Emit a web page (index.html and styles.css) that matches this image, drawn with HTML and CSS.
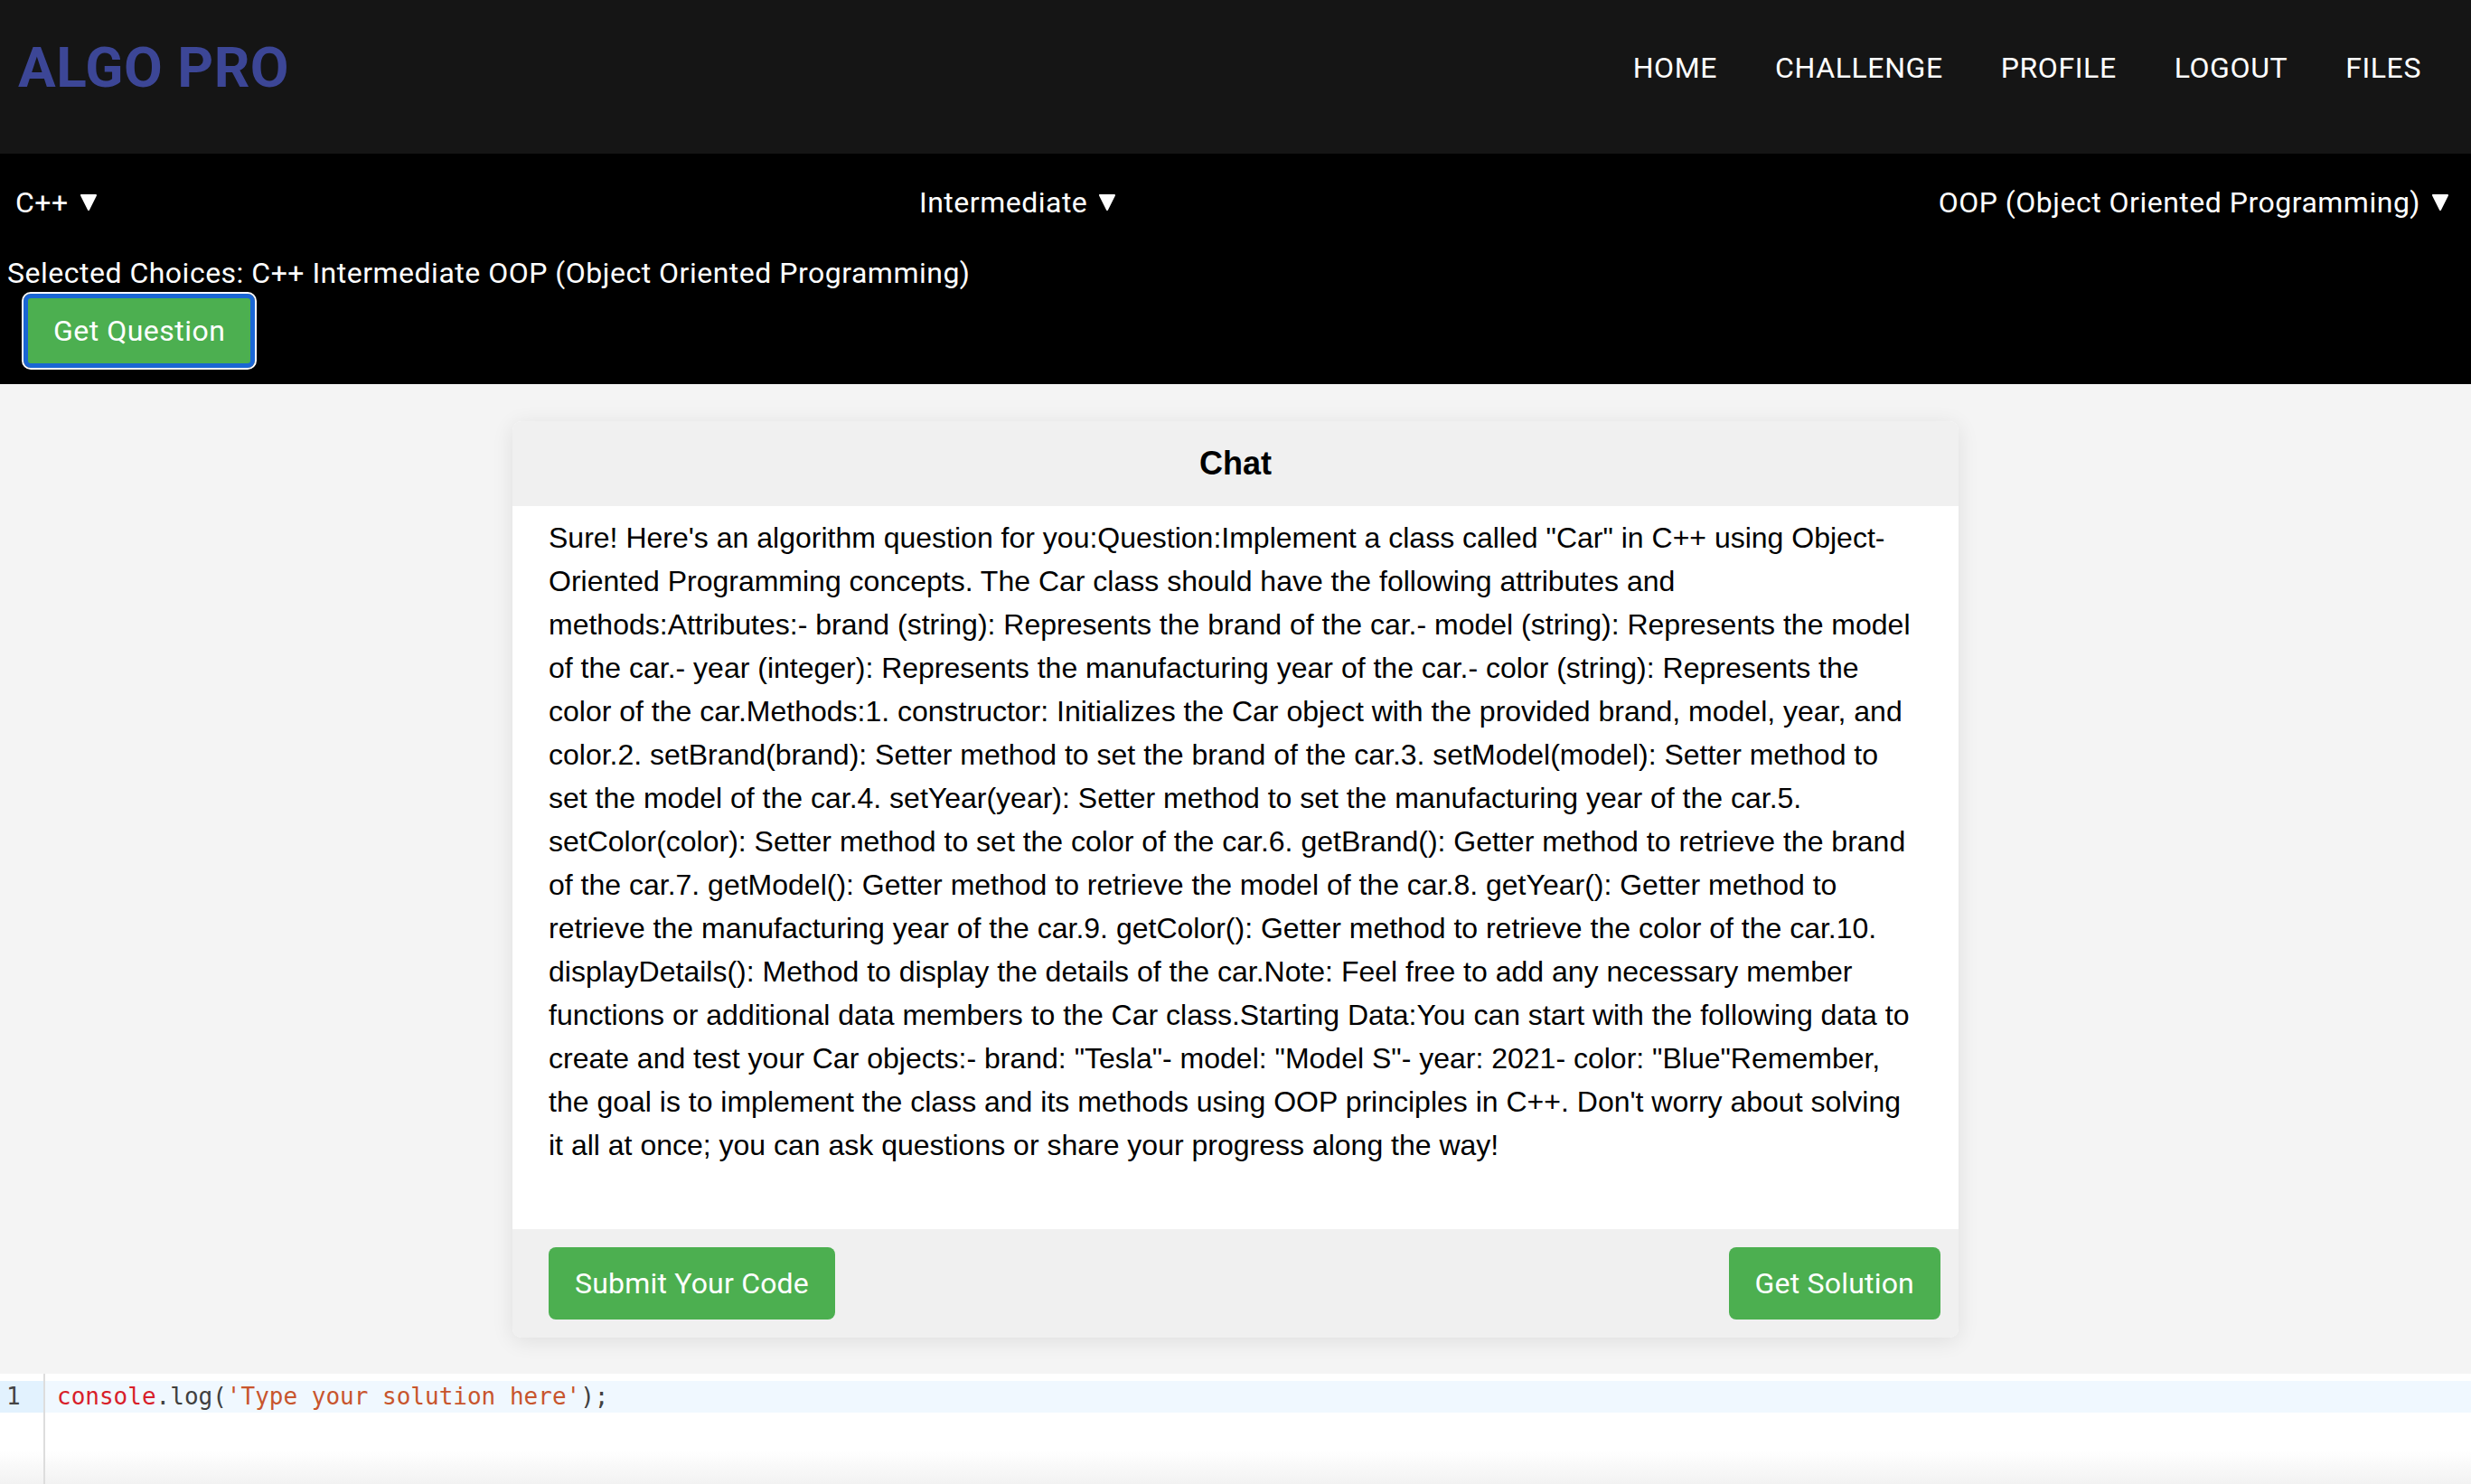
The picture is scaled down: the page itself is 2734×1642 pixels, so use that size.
FILE: index.html
```html
<!DOCTYPE html>
<html lang="en">
<head>
<meta charset="utf-8">
<title>ALGO PRO</title>
<link rel="stylesheet" href="styles.css">
</head>
<body>
<header class="topbar">
  <div class="logo">ALGO PRO</div>
  <nav class="nav">
    <a class="nav-link">HOME</a>
    <a class="nav-link">CHALLENGE</a>
    <a class="nav-link">PROFILE</a>
    <a class="nav-link">LOGOUT</a>
    <a class="nav-link">FILES</a>
  </nav>
</header>
<section class="controls">
  <div class="selects">
    <div class="select">C++<svg class="caret" viewBox="0 0 20 20"><polygon points="2,2 18,2 10,18"/></svg></div>
    <div class="select">Intermediate<svg class="caret" viewBox="0 0 20 20"><polygon points="2,2 18,2 10,18"/></svg></div>
    <div class="select">OOP (Object Oriented Programming)<svg class="caret" viewBox="0 0 20 20"><polygon points="2,2 18,2 10,18"/></svg></div>
  </div>
  <div class="selected">Selected Choices: C++ Intermediate OOP (Object Oriented Programming)</div>
  <button class="get-question">Get Question</button>
</section>
<main class="chat">
  <div class="chat-head">Chat</div>
  <div class="chat-body">Sure! Here's an algorithm question for you:Question:Implement a class called "Car" in C++ using Object-Oriented Programming concepts. The Car class should have the following attributes and methods:Attributes:- brand (string): Represents the brand of the car.- model (string): Represents the model of the car.- year (integer): Represents the manufacturing year of the car.- color (string): Represents the color of the car.Methods:1. constructor: Initializes the Car object with the provided brand, model, year, and color.2. setBrand(brand): Setter method to set the brand of the car.3. setModel(model): Setter method to set the model of the car.4. setYear(year): Setter method to set the manufacturing year of the car.5. setColor(color): Setter method to set the color of the car.6. getBrand(): Getter method to retrieve the brand of the car.7. getModel(): Getter method to retrieve the model of the car.8. getYear(): Getter method to retrieve the manufacturing year of the car.9. getColor(): Getter method to retrieve the color of the car.10. displayDetails(): Method to display the details of the car.Note: Feel free to add any necessary member functions or additional data members to the Car class.Starting Data:You can start with the following data to create and test your Car objects:- brand: "Tesla"- model: "Model S"- year: 2021- color: "Blue"Remember, the goal is to implement the class and its methods using OOP principles in C++. Don't worry about solving it all at once; you can ask questions or share your progress along the way!</div>
  <div class="chat-foot">
    <button class="btn-green btn-submit">Submit Your Code</button>
    <button class="btn-green">Get Solution</button>
  </div>
</main>
<div class="editor">
  <div class="gutter"><div class="ln ln-active">1</div></div>
  <div class="code"><div class="cline cline-active"><span class="tok-var">console</span><span class="tok-punc">.log(</span><span class="tok-str">'Type your solution here'</span><span class="tok-punc">);</span></div></div>
</div>
</body>
</html>
```
FILE: styles.css
```css
* { box-sizing: border-box; }
html, body { margin: 0; padding: 0; }
body {
  background: #f4f4f4;
  font-family: Roboto, "Liberation Sans", sans-serif;
  color: #000;
}
.topbar {
  background: #151515;
  height: 170px;
  padding: 0 55px 20px 20px;
  display: flex;
  align-items: center;
  justify-content: space-between;
}
.logo {
  font-family: Roboto, sans-serif;
  font-weight: 700;
  font-size: 62px;
  letter-spacing: 0.5px;
  color: #3c4696;
  line-height: 1.2;
}
.nav {
  display: flex;
  gap: 64px;
}
.nav-link {
  color: #fff;
  font-size: 32px;
  letter-spacing: 0.6px;
  line-height: 1.2;
  text-decoration: none;
}
.controls {
  background: #000;
  color: #fff;
  padding: 35px 24px 18px 0;
}
.selects {
  display: flex;
  justify-content: space-between;
  padding-left: 17px;
}
.select {
  font-size: 32px;
  letter-spacing: 0.5px;
  line-height: 38px;
  display: flex;
  align-items: center;
  gap: 12px;
}
.caret {
  width: 20px;
  height: 20px;
  fill: #fff;
  stroke: #fff;
  stroke-width: 2;
  stroke-linejoin: round;
}
.selected {
  font-size: 32px;
  letter-spacing: 0.5px;
  line-height: 38px;
  margin-top: 40px;
  padding-left: 8px;
}
.get-question {
  display: block;
  margin: 4px 0 0 26px;
  height: 82px;
  padding: 0 28px;
  background: #4caf50;
  color: #fff;
  font-family: Roboto, sans-serif;
  font-size: 32px;
  letter-spacing: 0.5px;
  border: 5px solid #1a66d4;
  border-radius: 8px;
  outline: 2px solid #fff;
}
.chat {
  width: 1600px;
  margin: 41px auto 0;
  background: #fff;
  border-radius: 10px;
  box-shadow: 0 4px 24px rgba(0, 0, 0, 0.09);
  overflow: hidden;
}
.chat-head {
  background: #f0f0f0;
  height: 94px;
  display: flex;
  align-items: center;
  justify-content: center;
  font-family: "Liberation Sans", Arial, sans-serif;
  font-weight: 700;
  font-size: 36px;
}
.chat-body {
  height: 800px;
  padding: 11px 40px 0 40px;
  font-family: "Liberation Sans", Arial, sans-serif;
  font-size: 32px;
  line-height: 48px;
  color: #000;
  background: #fff;
}
.chat-foot {
  background: #f0f0f0;
  padding: 20px;
  display: flex;
  justify-content: space-between;
}
.btn-green {
  height: 80px;
  padding: 0 29px;
  background: #4caf50;
  color: #fff;
  border: none;
  border-radius: 8px;
  font-family: Roboto, sans-serif;
  font-size: 32px;
  letter-spacing: 0.2px;
}
.btn-submit { margin-left: 20px; }
.editor {
  margin-top: 40px;
  height: 122px;
  display: flex;
  background: linear-gradient(#fff 70%, #f2f2f2 100%);
  font-family: "DejaVu Sans Mono", monospace;
  font-size: 26px;
}
.gutter {
  width: 50px;
  border-right: 2px solid #dddddd;
  padding-top: 8px;
  color: #444;
}
.ln {
  height: 35px;
  line-height: 35px;
  padding-left: 7px;
}
.ln-active { background: #e2f2fe; }
.code {
  flex: 1;
  padding-top: 8px;
}
.cline {
  height: 35px;
  line-height: 35px;
  padding-left: 13px;
  white-space: pre;
}
.cline-active { background: #f0f8ff; }
.tok-var { color: #d81e2a; }
.tok-punc { color: #404040; }
.tok-str { color: #c8552d; }
```
